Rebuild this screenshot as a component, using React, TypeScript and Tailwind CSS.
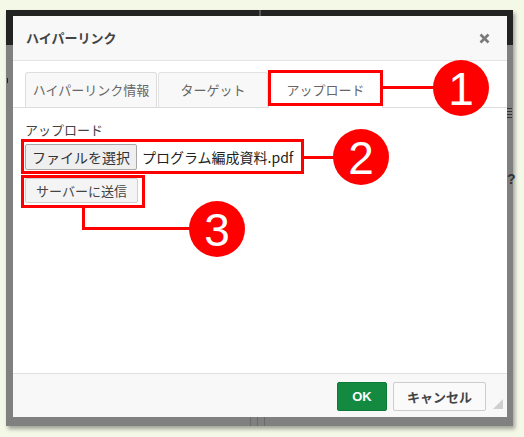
import React from "react";

const jp = { fontFamily: '"Noto Sans CJK JP", "Noto Sans", sans-serif' };
const num = { fontFamily: '"Liberation Sans", Arial, sans-serif' };

function Circle({ n, left, top }: { n: string; left: number; top: number }) {
  return (
    <div
      className="absolute w-[56px] h-[56px] rounded-full bg-[#ff0000] flex items-center justify-center text-white text-[46px] leading-none"
      style={{ left, top, ...num }}
    >
      <span className="mt-[2px]">{n}</span>
    </div>
  );
}

export default function App() {
  return (
    <div className="relative w-[524px] h-[437px] bg-[#f4f8e6] pt-[10px] pl-[6px] overflow-hidden" style={jp}>
      <div className="relative w-[507px] h-[416px] bg-[linear-gradient(#232323_35px,#808080_35px)] pt-[6px] pl-[7px] shadow-[2px_3px_4px_rgba(0,0,0,0.35)]">
        {/* background artifacts */}
        <div className="absolute left-[253px] top-0 w-[2px] h-[6px] bg-[#555]" />
        <div className="absolute left-[1px] top-[68px] w-[1px] h-[5px] bg-[#222]" />
        <div className="absolute left-[501px] top-[98px] w-[5px] flex flex-col gap-[2px]">
          <div className="h-[1px] bg-[#333]" />
          <div className="h-[1px] bg-[#333]" />
          <div className="h-[1px] bg-[#333]" />
          <div className="h-[1px] bg-[#333]" />
        </div>
        <div className="absolute left-[501px] top-[162px] text-[14px] font-bold text-[#333] leading-none" style={num}>?</div>
        <div className="absolute left-[244px] top-[407px] w-[1px] h-[9px] bg-[#6a6a6a]" />
        <div className="absolute left-[251px] top-[407px] w-[1px] h-[9px] bg-[#6a6a6a]" />
        <div className="absolute left-[258px] top-[407px] w-[1px] h-[9px] bg-[#6a6a6a]" />

        <div className="w-[494px] h-[401px] bg-white flex flex-col">
          {/* header */}
          <div className="h-[45px] shrink-0 bg-[#f8f8f8] border-b border-[#e4e4e4] flex items-center justify-between pl-[13px] pr-[17px]">
            <span className="text-[13px] font-bold text-[#444]">ハイパーリンク</span>
            <svg width="11" height="11" viewBox="0 0 11 11" className="mt-[1px]">
              <path d="M1.5 1.5 L9.5 9.5 M9.5 1.5 L1.5 9.5" stroke="#7a7a7a" strokeWidth="2.6" strokeLinecap="butt" />
            </svg>
          </div>

          {/* body */}
          <div className="flex-1 pt-[11px]">
            <div className="flex items-end h-[36px] border-b border-[#dddddd] pl-[12px]">
              <div className="w-[132px] h-[35px] bg-[#f8f8f8] border border-b-0 border-[#dddddd] rounded-t-[3px] flex items-center justify-center text-[13px] text-[#666]">
                ハイパーリンク情報
              </div>
              <div className="ml-[1px] w-[110px] h-[35px] bg-[#f8f8f8] border border-b-0 border-[#e2e2e2] rounded-t-[3px] flex items-center justify-center text-[13px] text-[#666]">
                ターゲット
              </div>
              <div className="w-[115px] h-[36px] -mb-[1px] pb-[2px] bg-white border border-b-0 border-[#dddddd] rounded-t-[3px] flex items-center justify-center text-[13px] text-[#666]">
                アップロード
              </div>
            </div>

            <div className="pl-[12px]">
              <div className="mt-[14px] text-[13px] leading-[16px] text-[#444]">アップロード</div>
              <div className="mt-[6px] flex items-center h-[26px]">
                <div className="h-[26px] w-[112px] bg-[#efefef] border border-[#a8a8a8] rounded-[2px] flex items-center justify-center text-[14px] text-[#333]">
                  ファイルを選択
                </div>
                <span className="ml-[5px] text-[14px] text-[#222]">プログラム編成資料.pdf</span>
              </div>
              <div className="mt-[8px] h-[25px] w-[113px] bg-[#f4f4f4] border border-[#cfcfcf] rounded-[2px] flex items-center justify-center text-[13px] text-[#444]">
                サーバーに送信
              </div>
            </div>
          </div>

          {/* footer */}
          <div className="relative h-[44px] shrink-0 bg-[#f8f8f8] border-t border-[#e0e0e0] flex items-start justify-end pt-[8px] pr-[21px] gap-[6px]">
            <div className="w-[50px] h-[29px] bg-[#138a3f] border border-[#0d7a36] rounded-[2px] flex items-center justify-center text-[13px] font-bold text-white" style={num}>
              OK
            </div>
            <div className="w-[93px] h-[29px] bg-[#fafafa] border border-[#cccccc] rounded-[2px] flex items-center justify-center text-[13px] font-bold text-[#444]">
              キャンセル
            </div>
            <div className="absolute right-[4px] bottom-[8px] w-0 h-0 border-l-[10px] border-l-transparent border-b-[10px] border-b-[#cfcfcf]" />
          </div>
        </div>
      </div>

      {/* callouts */}
      <div className="absolute left-[268px] top-[70px] w-[115px] h-[36px] border-[3px] border-[#ff0000]" />
      <div className="absolute left-[383px] top-[86px] w-[52px] h-[3px] bg-[#ff0000]" />
      <Circle n="1" left={433} top={60} />

      <div className="absolute left-[21px] top-[139px] w-[283px] h-[35px] border-[3px] border-[#ff0000]" />
      <div className="absolute left-[304px] top-[156px] w-[31px] h-[3px] bg-[#ff0000]" />
      <Circle n="2" left={333} top={129} />

      <div className="absolute left-[21px] top-[175px] w-[124px] h-[33px] border-[3px] border-[#ff0000]" />
      <div className="absolute left-[82px] top-[208px] w-[3px] h-[22px] bg-[#ff0000]" />
      <div className="absolute left-[82px] top-[227px] w-[110px] h-[3px] bg-[#ff0000]" />
      <Circle n="3" left={189} top={201} />
    </div>
  );
}
